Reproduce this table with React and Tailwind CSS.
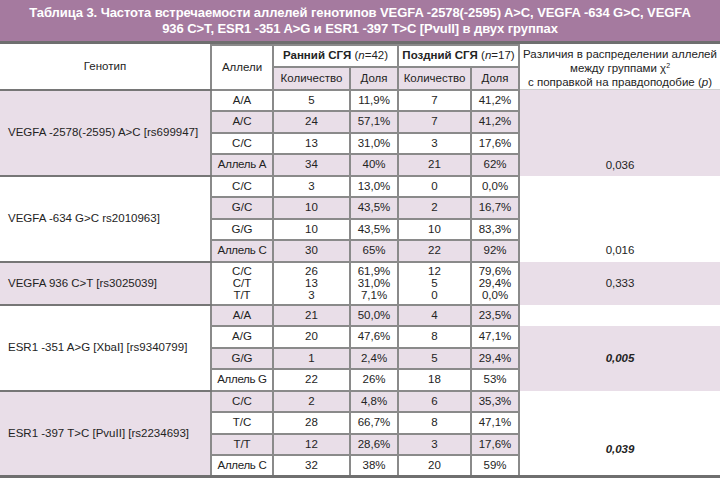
import React from 'react'

// Table 3 — allele frequencies, two patient groups.
// Middle columns carry the full grid; the genotype and p columns only
// change background between blocks.
const blocks = [
  {
    name: 'VEGFA -2578(-2595) A>C [rs699947]',
    nameShade: true,
    stripe: [false, true, false, true],
    rows: [
      ['A/A', '5', '11,9%', '7', '41,2%'],
      ['A/C', '24', '57,1%', '7', '41,2%'],
      ['C/C', '13', '31,0%', '3', '17,6%'],
      ['Аллель A', '34', '40%', '21', '62%'],
    ],
    p: '0,036',
    pShade: true,
    pPad: 'pb-[4px]',
  },
  {
    name: 'VEGFA -634 G>C rs2010963]',
    nameShade: false,
    stripe: [false, true, false, true],
    rows: [
      ['C/C', '3', '13,0%', '0', '0,0%'],
      ['G/C', '10', '43,5%', '2', '16,7%'],
      ['G/G', '10', '43,5%', '10', '83,3%'],
      ['Аллель C', '30', '65%', '22', '92%'],
    ],
    p: '0,016',
    pShade: false,
    pPad: 'pb-[5px]',
  },
]

const lower = [
  {
    name: 'ESR1 -351 A>G [XbaI] [rs9340799]',
    nameShade: false,
    stripe: [true, false, true, false],
    rows: [
      ['A/A', '21', '50,0%', '4', '23,5%'],
      ['A/G', '20', '47,6%', '8', '47,1%'],
      ['G/G', '1', '2,4%', '5', '29,4%'],
      ['Аллель G', '22', '26%', '18', '53%'],
    ],
  },
  {
    name: 'ESR1 -397 T>C [PvuII] [rs2234693]',
    nameShade: true,
    stripe: [true, false, true, false],
    rows: [
      ['C/C', '2', '4,8%', '6', '35,3%'],
      ['T/C', '28', '66,7%', '8', '47,1%'],
      ['T/T', '12', '28,6%', '3', '17,6%'],
      ['Аллель C', '32', '38%', '20', '59%'],
    ],
  },
]

const shade = 'bg-[#e9dee8]'
const grid = 'border-2 border-[#8a8a8a] text-center p-0'
const nameCell = 'border-b-2 border-[#767676] text-left align-middle pl-[8px] p-0'

function MiddleCells({ row, shaded }) {
  return row.map((v, i) => (
    <td
      key={i}
      className={`${grid} ${shaded ? shade : 'bg-white'} ${i === 0 && v.startsWith('Аллель') ? 'tracking-[-0.3px]' : ''}`}
    >
      {v}
    </td>
  ))
}

export default function App() {
  return (
    <div className="w-[720px] h-[478px] bg-white overflow-hidden font-['Liberation_Sans',Arial,sans-serif] text-[#232323]">
      <div className="h-[44px] bg-[#a57a9f] border-b-[3px] border-[#6f6f6f] flex flex-col items-center justify-center text-white font-bold text-[13px] leading-[16px] tracking-[-0.08px] whitespace-nowrap">
        <span>Таблица 3. Частота встречаемости аллелей генотипов VEGFA -2578(-2595) A&gt;C, VEGFA -634 G&gt;C, VEGFA</span>
        <span>936 C&gt;T, ESR1 -351 A&gt;G и ESR1 -397 T&gt;C [PvuII] в двух группах</span>
      </div>

      <table className="w-[720px] table-fixed border-collapse text-[11.5px] leading-[13px]">
        <colgroup>
          <col className="w-[211px]" />
          <col className="w-[62px]" />
          <col className="w-[77px]" />
          <col className="w-[48px]" />
          <col className="w-[73px]" />
          <col className="w-[48px]" />
          <col className="w-[201px]" />
        </colgroup>
        <thead>
          <tr className="h-[21px]">
            <td rowSpan={2} className="border-b-2 border-[#767676] text-center p-0 bg-white">Генотип</td>
            <td rowSpan={2} className={`${grid} bg-white`}>Аллели</td>
            <td colSpan={2} className={`${grid} bg-white`}>
              <span className="font-bold">Ранний СГЯ</span> (<i>n</i>=42)
            </td>
            <td colSpan={2} className={`${grid} bg-white`}>
              <span className="font-bold">Поздний СГЯ</span> (<i>n</i>=17)
            </td>
            <td rowSpan={2} className="text-center align-top p-0 pt-[2px] leading-[14px] bg-white border-b border-[#d0d0d0]">
              Различия в распределении аллелей
              <br />
              между группами χ<sup className="text-[7px] -top-[4px]">2</sup>
              <br />
              с поправкой на правдоподобие (<i>p</i>)
            </td>
          </tr>
          <tr className="h-[22px]">
            <td className={`${grid} ${shade}`}>Количество</td>
            <td className={`${grid} ${shade}`}>Доля</td>
            <td className={`${grid} ${shade}`}>Количество</td>
            <td className={`${grid} ${shade}`}>Доля</td>
          </tr>
        </thead>
        <tbody>
          {blocks.map((b) =>
            b.rows.map((row, ri) => (
              <tr key={b.name + ri} className="h-[21.5px]">
                {ri === 0 && (
                  <td rowSpan={4} className={`${nameCell} ${b.nameShade ? shade : 'bg-white'}`}>
                    {b.name}
                  </td>
                )}
                <MiddleCells row={row} shaded={b.stripe[ri]} />
                {ri === 0 && (
                  <td rowSpan={4} className={`p-0 text-center align-bottom ${b.pPad} ${b.pShade ? shade : 'bg-white'}`}>
                    {b.p}
                  </td>
                )}
              </tr>
            ))
          )}

          <tr className="h-[43px]">
            <td className={`${nameCell} ${shade}`}>VEGFA 936 C&gt;T [rs3025039]</td>
            <td className={`${grid} bg-white leading-[12px]`}>C/C<br />C/T<br />T/T</td>
            <td className={`${grid} bg-white leading-[12px]`}>26<br />13<br />3</td>
            <td className={`${grid} bg-white leading-[12px]`}>61,9%<br />31,0%<br />7,1%</td>
            <td className={`${grid} bg-white leading-[12px]`}>12<br />5<br />0</td>
            <td className={`${grid} bg-white leading-[12px]`}>79,6%<br />29,4%<br />0,0%</td>
            <td className={`p-0 text-center align-middle ${shade}`}>0,333</td>
          </tr>

          {lower[0].rows.map((row, ri) => (
            <tr key={'a' + ri} className="h-[21.5px]">
              {ri === 0 && (
                <td rowSpan={4} className={`${nameCell} bg-white`}>{lower[0].name}</td>
              )}
              <MiddleCells row={row} shaded={lower[0].stripe[ri]} />
              {ri === 0 && <td className="p-0 bg-white" />}
              {ri === 1 && (
                <td rowSpan={3} className={`p-0 text-center align-middle font-bold italic ${shade}`}>0,005</td>
              )}
            </tr>
          ))}

          {lower[1].rows.map((row, ri) => (
            <tr key={'b' + ri} className="h-[21.5px]">
              {ri === 0 && (
                <td rowSpan={4} className={`text-left align-middle pl-[8px] p-0 ${shade} border-b-[3px] border-[#6f6f6f]`}>
                  {lower[1].name}
                </td>
              )}
              <td className={`${grid} ${lower[1].stripe[ri] ? shade : 'bg-white'} ${ri === 3 ? 'border-b-[3px] border-b-[#6f6f6f] tracking-[-0.3px]' : ''}`}>{row[0]}</td>
              {row.slice(1).map((v, i) => (
                <td key={i} className={`${grid} ${lower[1].stripe[ri] ? shade : 'bg-white'} ${ri === 3 ? 'border-b-[3px] border-b-[#6f6f6f]' : ''}`}>{v}</td>
              ))}
              {ri === 0 && (
                <td rowSpan={4} className="p-0 pb-[19px] text-center align-bottom font-bold italic bg-white border-b-[3px] border-[#6f6f6f]">
                  0,039
                </td>
              )}
            </tr>
          ))}
        </tbody>
      </table>
    </div>
  )
}
